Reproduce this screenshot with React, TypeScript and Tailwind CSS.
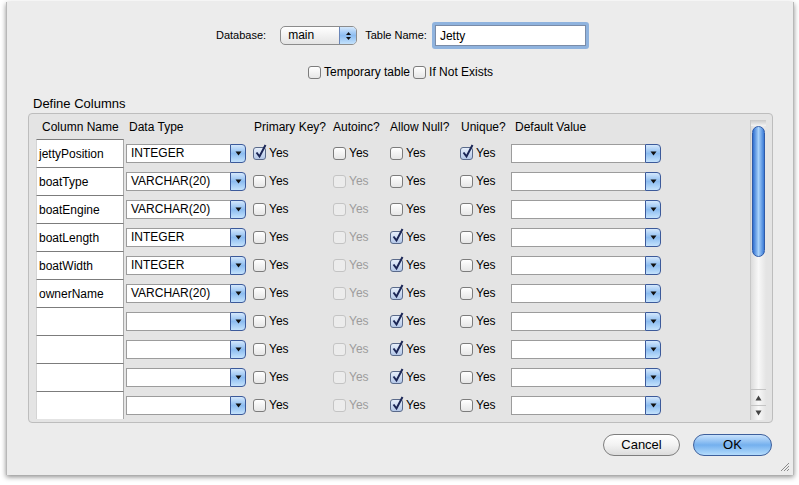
import React from 'react';

type Row = {
  name: string;
  type: string;
  pk: boolean;
  auto: boolean;
  autoEnabled: boolean;
  nul: boolean;
  uniq: boolean;
};

const rows: Row[] = [
  { name: 'jettyPosition', type: 'INTEGER', pk: true, auto: false, autoEnabled: true, nul: false, uniq: true },
  { name: 'boatType', type: 'VARCHAR(20)', pk: false, auto: false, autoEnabled: false, nul: false, uniq: false },
  { name: 'boatEngine', type: 'VARCHAR(20)', pk: false, auto: false, autoEnabled: false, nul: false, uniq: false },
  { name: 'boatLength', type: 'INTEGER', pk: false, auto: false, autoEnabled: false, nul: true, uniq: false },
  { name: 'boatWidth', type: 'INTEGER', pk: false, auto: false, autoEnabled: false, nul: true, uniq: false },
  { name: 'ownerName', type: 'VARCHAR(20)', pk: false, auto: false, autoEnabled: false, nul: true, uniq: false },
  { name: '', type: '', pk: false, auto: false, autoEnabled: false, nul: true, uniq: false },
  { name: '', type: '', pk: false, auto: false, autoEnabled: false, nul: true, uniq: false },
  { name: '', type: '', pk: false, auto: false, autoEnabled: false, nul: true, uniq: false },
  { name: '', type: '', pk: false, auto: false, autoEnabled: false, nul: true, uniq: false },
];

function Checkbox({ checked = false, disabled = false }: { checked?: boolean; disabled?: boolean }) {
  return (
    <span
      className={`relative inline-block w-[13px] h-[13px] rounded-[3px] border shrink-0 ${
        disabled
          ? 'border-[#c4c4c4] bg-[#ececec]'
          : checked
          ? 'border-[#5a6a8a] bg-gradient-to-b from-[#e6eefa] to-[#b4c8e8]'
          : 'border-[#7c7c7c] bg-gradient-to-b from-white to-[#e6e6e6]'
      }`}
    >
      {checked && (
        <svg className="absolute -top-[4px] left-[1px]" width="13" height="15" viewBox="0 0 13 15">
          <path d="M1.5 8.5 L4.5 12.5 L10.5 1" fill="none" stroke="#1b2656" strokeWidth="2" />
        </svg>
      )}
    </span>
  );
}

function CheckYes({ checked = false, disabled = false }: { checked?: boolean; disabled?: boolean }) {
  return (
    <div className="flex items-center gap-[3px]">
      <Checkbox checked={checked} disabled={disabled} />
      <span className={disabled ? 'text-[#9c9c9c]' : 'text-black'}>Yes</span>
    </div>
  );
}

function DownTriangle() {
  return (
    <svg width="7" height="5" viewBox="0 0 7 5">
      <path d="M0.5 0.5 L6.5 0.5 L3.5 4.5 Z" fill="#111" />
    </svg>
  );
}

function Combo({ value, width }: { value: string; width: string }) {
  return (
    <div className={`flex h-[19px] ${width}`}>
      <div className="flex-1 bg-white border border-[#9c9c9c] border-r-0 flex items-center pl-[4px] text-[12px] text-black overflow-hidden whitespace-nowrap">
        {value}
      </div>
      <div className="w-[16px] h-[19px] rounded-r-[4px] border border-[#3c5a9a] bg-gradient-to-b from-[#d4e8fc] via-[#8cbcf0] to-[#c4e2fc] flex items-center justify-center">
        <DownTriangle />
      </div>
    </div>
  );
}

function Scrollbar() {
  return (
    <div className="w-[16px] mt-[6px] mb-[2px] mr-[6px] flex flex-col border-l border-[#c8c8c8] bg-gradient-to-r from-[#dcdcdc] via-[#f8f8f8] to-[#e4e4e4]">
      <div className="h-[6px] bg-gradient-to-b from-[#c8c8c8] to-[#f4f4f4]" />
      <div className="mx-[1px] h-[131px] rounded-full border border-[#2e5aa8] bg-gradient-to-r from-[#2f6fd0] via-[#a8d2fa] to-[#3a7ad6]" />
      <div className="flex-1" />
      <div className="h-[16px] border-t border-[#c4c4c4] flex items-center justify-center">
        <svg width="7" height="6" viewBox="0 0 7 6">
          <path d="M0.5 5.5 L6.5 5.5 L3.5 0.5 Z" fill="#444" />
        </svg>
      </div>
      <div className="h-[15px] border-t border-[#c4c4c4] flex items-center justify-center">
        <svg width="7" height="6" viewBox="0 0 7 6">
          <path d="M0.5 0.5 L6.5 0.5 L3.5 5.5 Z" fill="#444" />
        </svg>
      </div>
    </div>
  );
}

export default function App() {
  return (
    <div className="w-[799px] h-[485px] bg-white pt-[2px] pl-[6px] font-['Lucida_Grande','Liberation_Sans',sans-serif] text-[12px] text-black">
      <div className="relative w-[788px] h-[473px] bg-[#ececec] border-l border-r border-[#b8b8b8] shadow-[0_2px_5px_rgba(0,0,0,0.45)] flex flex-col">
        {/* database / table name */}
        <div className="mt-[20px] h-[27px] flex items-center pl-[209px]">
          <span className="text-[11px]">Database:</span>
          <div className="ml-[14px] w-[77px] h-[19px] rounded-[5px] border border-[#8c8c8c] flex overflow-hidden bg-gradient-to-b from-white to-[#e4e4e4]">
            <span className="flex-1 pl-[7px] text-[12px] leading-[17px]">main</span>
            <div className="w-[17px] border-l border-[#6a86b8] bg-gradient-to-b from-[#d4e8fc] via-[#8cbcf0] to-[#c4e2fc] flex flex-col items-center justify-center gap-[2px]">
              <svg width="5" height="3" viewBox="0 0 5 3">
                <path d="M0 3 L5 3 L2.5 0 Z" fill="#111" />
              </svg>
              <svg width="5" height="3" viewBox="0 0 5 3">
                <path d="M0 0 L5 0 L2.5 3 Z" fill="#111" />
              </svg>
            </div>
          </div>
          <span className="ml-[8px] text-[11px]">Table Name:</span>
          <div className="ml-[5px] w-[157px] h-[27px] rounded-[3px] bg-[#8fb3de] p-[3px]">
            <div className="w-full h-full bg-white border border-[#7a8ca8] pl-[4px] flex items-center text-[12px]">
              Jetty
            </div>
          </div>
        </div>

        {/* options */}
        <div className="mt-[16px] h-[14px] flex items-center pl-[301px] text-[12px]">
          <Checkbox />
          <span className="ml-[3px]">Temporary table</span>
          <span className="ml-[3px]" />
          <Checkbox />
          <span className="ml-[3px]">If Not Exists</span>
        </div>

        <div className="mt-[17px] pl-[26px] text-[13px] leading-[15px]">Define Columns</div>

        {/* group box */}
        <div className="mt-[2px] ml-[21px] w-[745px] h-[310px] rounded-[4px] border border-[#bdbdbd] bg-[#e4e4e4] flex overflow-hidden">
          <div className="flex-1 pl-[7px] overflow-hidden">
            <div className="h-[25px] flex items-center whitespace-nowrap">
              <div className="w-[90px] pl-[6px]">Column Name</div>
              <div className="w-[127px] pl-[3px]">Data Type</div>
              <div className="w-[80px] pl-[1px]">Primary Key?</div>
              <div className="w-[57px]">Autoinc?</div>
              <div className="w-[70px]">Allow Null?</div>
              <div className="w-[51px] pl-[1px]">Unique?</div>
              <div className="w-[150px] pl-[4px]">Default Value</div>
            </div>
            {rows.map((r, i) => (
              <div key={i} className="h-[28px] flex items-center">
                <div className="w-[90px] h-full">
                  <div className="w-[88px] h-full bg-white border-t border-t-[#7c7c7c] border-r border-r-[#a8a8a8] border-l border-l-[#d4d4d4] pl-[2px] flex items-center">
                    {r.name}
                  </div>
                </div>
                <div className="w-[127px]">
                  <Combo value={r.type} width="w-[120px]" />
                </div>
                <div className="w-[80px]">
                  <CheckYes checked={r.pk} />
                </div>
                <div className="w-[57px]">
                  <CheckYes checked={r.auto} disabled={!r.autoEnabled} />
                </div>
                <div className="w-[70px]">
                  <CheckYes checked={r.nul} />
                </div>
                <div className="w-[51px]">
                  <CheckYes checked={r.uniq} />
                </div>
                <div className="w-[150px]">
                  <Combo value="" width="w-[150px]" />
                </div>
              </div>
            ))}
          </div>
          <Scrollbar />
        </div>

        {/* buttons */}
        <div className="mt-[11px] flex justify-end pr-[21px] gap-[13px]">
          <button className="w-[77px] h-[22px] rounded-full border border-[#7e7e7e] bg-gradient-to-b from-white via-[#f2f2f2] to-[#dcdcdc] text-[13px] leading-[20px]">
            Cancel
          </button>
          <button className="w-[79px] h-[22px] rounded-full border border-[#3d5f9c] bg-gradient-to-b from-[#c8e2fc] via-[#74b0ee] to-[#b4dcfc] text-[13px] leading-[20px]">
            OK
          </button>
        </div>

        {/* resize grip */}
        <svg className="absolute right-[3px] bottom-[3px]" width="11" height="11" viewBox="0 0 11 11">
          <path d="M10 2 L2 10 M10 5 L5 10 M10 8 L8 10" stroke="#8a8a8a" strokeWidth="1" />
        </svg>
      </div>
    </div>
  );
}
